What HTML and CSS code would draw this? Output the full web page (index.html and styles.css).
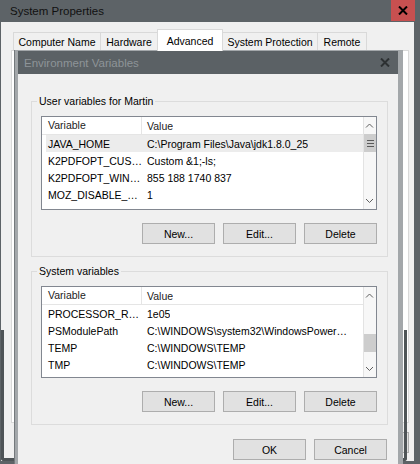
FILE: index.html
```html
<!DOCTYPE html>
<html>
<head>
<meta charset="utf-8">
<title>System Properties</title>
<link rel="stylesheet" href="styles.css">
</head>
<body>
<div class="win">
  <div class="win-title">
    <span class="title">System Properties</span>
    <div class="close"><svg width="10" height="9" viewBox="0 0 10 9"><path d="M1 0.5 L9 8.5 M9 0.5 L1 8.5" stroke="#000" stroke-width="2"/></svg></div>
  </div>
  <div class="client">
    <div class="tabs">
      <div class="tab t1">Computer Name</div>
      <div class="tab t2">Hardware</div>
      <div class="tab t3 active">Advanced</div>
      <div class="tab t4">System Protection</div>
      <div class="tab t5">Remote</div>
    </div>
    <div class="panel"></div>
    <div class="outer-btns">
      <div class="btn"></div>
    </div>
  </div>
</div>

<div class="behind"></div>

<div class="env">
  <div class="env-title">
    <span class="env-name">Environment Variables</span>
    <svg class="env-x" width="10" height="9" viewBox="0 0 10 9"><path d="M1 0.5 L9 8.5 M9 0.5 L1 8.5" stroke="#2c3032" stroke-width="2"/></svg>
  </div>
  <div class="env-body">
    <div class="group g1">
      <span class="legend">User variables for Martin</span>
      <div class="list l1">
        <div class="list-main">
          <div class="row head"><span class="c1">Variable</span><span class="c2">Value</span></div>
          <div class="row sel"><span class="c1">JAVA_HOME</span><span class="c2">C:\Program Files\Java\jdk1.8.0_25</span></div>
          <div class="row"><span class="c1">K2PDFOPT_CUS…</span><span class="c2">Custom &amp;1;-ls;</span></div>
          <div class="row"><span class="c1">K2PDFOPT_WIN…</span><span class="c2">855 188 1740 837</span></div>
          <div class="row"><span class="c1">MOZ_DISABLE_…</span><span class="c2">1</span></div>
        </div>
        <div class="scroll">
          <div class="arrow"><svg width="13" height="17" viewBox="0 0 13 17"><path d="M3 10.5 L6.5 7 L10 10.5" fill="none" stroke="#606060" stroke-width="1"/></svg></div>
          <div class="track"><div class="thumb" style="margin-top:0px"><i></i><i></i><i></i></div></div>
          <div class="arrow"><svg width="13" height="17" viewBox="0 0 13 17"><path d="M3 7 L6.5 10.5 L10 7" fill="none" stroke="#606060" stroke-width="1"/></svg></div>
        </div>
      </div>
      <div class="btns">
        <div class="btn">New...</div>
        <div class="btn">Edit...</div>
        <div class="btn">Delete</div>
      </div>
    </div>

    <div class="group g2">
      <span class="legend">System variables</span>
      <div class="list l2">
        <div class="list-main">
          <div class="row head"><span class="c1">Variable</span><span class="c2">Value</span></div>
          <div class="row"><span class="c1">PROCESSOR_R…</span><span class="c2">1e05</span></div>
          <div class="row"><span class="c1">PSModulePath</span><span class="c2">C:\WINDOWS\system32\WindowsPower…</span></div>
          <div class="row"><span class="c1">TEMP</span><span class="c2">C:\WINDOWS\TEMP</span></div>
          <div class="row"><span class="c1">TMP</span><span class="c2">C:\WINDOWS\TEMP</span></div>
        </div>
        <div class="scroll">
          <div class="arrow"><svg width="13" height="17" viewBox="0 0 13 17"><path d="M3 10.5 L6.5 7 L10 10.5" fill="none" stroke="#606060" stroke-width="1"/></svg></div>
          <div class="track"><div class="thumb" style="margin-top:30px"></div></div>
          <div class="arrow"><svg width="13" height="17" viewBox="0 0 13 17"><path d="M3 7 L6.5 10.5 L10 7" fill="none" stroke="#606060" stroke-width="1"/></svg></div>
        </div>
      </div>
      <div class="btns">
        <div class="btn">New...</div>
        <div class="btn">Edit...</div>
        <div class="btn">Delete</div>
      </div>
    </div>

    <div class="dlg-btns">
      <div class="btn">OK</div>
      <div class="btn">Cancel</div>
    </div>
  </div>
</div>
</body>
</html>
```

FILE: styles.css
```css
* { box-sizing: border-box; }
html, body { margin: 0; padding: 0; }
body {
  width: 420px;
  height: 464px;
  overflow: hidden;
  position: relative;
  background: #5d6367;
  font-family: "Liberation Sans", Arial, sans-serif;
  font-size: 10.5px;
  color: #000;
}

/* outer window */
.win {
  width: 420px;
  height: 464px;
  display: flex;
  flex-direction: column;
  background: #5d6367;
}
.win-title {
  height: 22px;
  display: flex;
  align-items: center;
  padding-left: 10px;
  flex: none;
}
.title {
  flex: 1;
  font-size: 11.5px;
  color: #111;
}
.close {
  width: 24px;
  height: 21px;
  align-self: flex-start;
  margin-right: 5px;
  background: #c75050;
  display: flex;
  align-items: center;
  justify-content: center;
}
.client {
  flex: 1;
  margin: 0 6px 3px 1px;
  background: #f0f0f0;
  display: flex;
  flex-direction: column;
}
.tabs {
  display: flex;
  align-items: flex-end;
  margin: 7px 0 -1px 12px;
  height: 22px;
  position: relative;
  z-index: 1;
}
.tab {
  height: 18px;
  margin-bottom: 1px;
  border: 1px solid #d9d9d9;
  border-bottom: none;
  background: #f0f0f0;
  display: flex;
  align-items: center;
  justify-content: center;
  margin-left: -1px;
}
.t1 { width: 88px; margin-left: 0; }
.t2 { width: 58px; }
.t3 { width: 66px; }
.t4 { width: 96px; }
.t5 { width: 50px; }
.tab.active {
  height: 22px;
  margin-bottom: 0;
  background: #fff;
  position: relative;
  z-index: 2;
}
.panel {
  margin: 0 5px 0 10px;
  height: 373px;
  border: 1px solid #d9d9d9;
  background: #fff;
  flex: none;
}
.outer-btns {
  display: flex;
  justify-content: flex-end;
  margin: 9px 5px 0 0;
}

/* frame of a window lying between the two dialogs */
.behind {
  position: absolute;
  left: 1px;
  top: 330px;
  width: 406px;
  height: 131px;
  border: 3px solid #4e5457;
  border-top: none;
  border-radius: 0 0 3px 3px;
}

/* buttons */
.btn {
  width: 73px;
  height: 21px;
  background: #e1e1e1;
  border: 1px solid #adadad;
  display: flex;
  align-items: center;
  justify-content: center;
}

/* environment dialog */
.env {
  position: absolute;
  left: 14px;
  top: 50px;
  width: 389px;
  height: 420px;
  background: #a3a7aa;
  border-left: 1px solid #74797c;
  padding: 1px 5px 0 3px;
  display: flex;
  flex-direction: column;
}
.env-title {
  height: 23px;
  background: #5b6165;
  display: flex;
  align-items: center;
  padding: 0 8px 0 6px;
  flex: none;
}
.env-name {
  flex: 1;
  font-size: 11.5px;
  color: #8e9498;
}
.env-body {
  flex: 1;
  background: #f0f0f0;
  display: flex;
  flex-direction: column;
}
.group {
  position: relative;
  border: 1px solid #dcdcdc;
  margin: 27px 10px 0 13px;
  padding: 14px 10px 12px 9px;
}
.g2 { margin-top: 14px; }
.legend {
  position: absolute;
  left: 5px;
  top: -7px;
  padding: 0 2px;
  line-height: 13px;
  background: #f0f0f0;
}
.list {
  height: 94px;
  border: 1px solid #828790;
  background: #fff;
  display: flex;
}
.l2 { height: 92px; }
.list-main {
  flex: 1;
  overflow: hidden;
  min-width: 0;
}
.row {
  height: 17px;
  display: flex;
  align-items: center;
  white-space: nowrap;
}
.row .c1 {
  width: 100px;
  padding-left: 6px;
  flex: none;
  overflow: hidden;
}
.row .c2 {
  padding-left: 5px;
  overflow: hidden;
}
.row.head {
  height: 18px;
  border-bottom: 1px solid #e5e5e5;
  color: #222;
}
.row.head .c1 {
  height: 17px;
  line-height: 17px;
  border-right: 1px solid #e5e5e5;
}
.row.sel {
  margin-left: 4px;
  background: #ececec;
}
.row.sel .c1 { width: 96px; padding-left: 2px; }

.scroll {
  width: 13px;
  flex: none;
  display: flex;
  flex-direction: column;
  background: #f7f7f7;
  border-left: 1px solid #e3e3e3;
}
.arrow {
  height: 17px;
  flex: none;
  display: flex;
}
.arrow svg { display: block; margin-left: -1px; }
.track {
  flex: 1;
  display: flex;
  flex-direction: column;
}
.thumb {
  height: 18px;
  background: #cdcdcd;
  display: flex;
  flex-direction: column;
  align-items: center;
  justify-content: center;
  gap: 2px;
}
.thumb i {
  display: block;
  width: 7px;
  height: 1px;
  background: #5a5a5a;
}
.btns {
  display: flex;
  justify-content: flex-end;
  gap: 8px;
  margin-top: 13px;
}
.dlg-btns {
  display: flex;
  justify-content: flex-end;
  gap: 8px;
  margin: 14px 11px 0 0;
}
```
